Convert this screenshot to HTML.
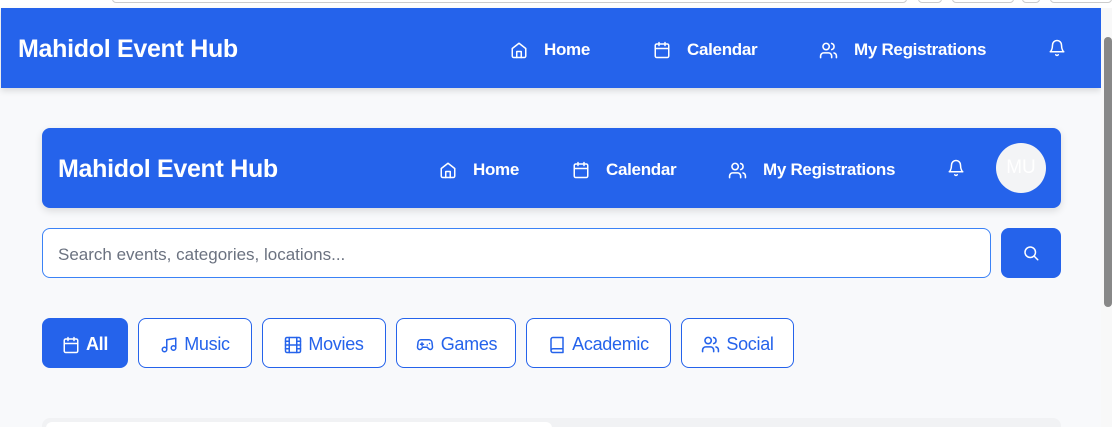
<!DOCTYPE html>
<html><head><style>
*{box-sizing:border-box;margin:0;padding:0}
html,body{width:1112px;height:427px;overflow:hidden}
body{background:#f8f9fb;font-family:"Liberation Sans",Arial,sans-serif;position:relative}
.top{position:absolute;left:0;top:0;width:1112px;height:8px;background:#fff}
.top i{position:absolute;top:-6px;height:9px;border:1px solid #ccc;border-radius:4px;background:#fff}
.hdr{position:absolute;background:#2563eb;color:#fff;display:flex;align-items:center}
.h1{left:1px;top:8px;width:1100px;height:80px;box-shadow:0 3px 6px rgba(0,0,0,.12)}
.h2{left:42px;top:128px;width:1019px;height:80px;border-radius:8px;box-shadow:0 3px 8px rgba(0,0,0,.12)}
.logo{position:absolute;font-weight:bold;font-size:25px;letter-spacing:-0.3px}
.nav{position:absolute;display:flex;align-items:center;font-weight:bold;font-size:17px;letter-spacing:-0.3px}
.nav svg{margin-right:16px}
svg{fill:none;stroke:currentColor;stroke-width:2;stroke-linecap:round;stroke-linejoin:round}
.sb{position:absolute;left:1101px;top:8px;width:11px;height:419px;background:#f8f8f8}
.thumb{position:absolute;left:1104px;top:37px;width:8px;height:270px;background:#888;border-radius:4px}
.search{position:absolute;left:42px;top:228px;width:949px;height:50px;border:1px solid #3b82f6;border-radius:8px;background:#fff;font-size:17px;color:#6b7280;padding:16px 0 0 15px}
.sbtn{position:absolute;left:1001px;top:228px;width:60px;height:50px;background:#2563eb;border-radius:8px;color:#fff;display:flex;align-items:center;justify-content:center}
.chip{position:absolute;top:318px;height:50px;border:1px solid #2563eb;border-radius:8px;background:#fff;color:#2563eb;font-size:18px;display:flex;align-items:center;justify-content:center;letter-spacing:-0.3px;padding-top:3px}
.chip svg{margin-right:6px}
.chip.on{background:#2563eb;color:#fff;font-weight:bold}
.card{position:absolute;left:42px;top:418px;width:1019px;height:20px;background:#f1f2f4;border-radius:8px}
.card i{position:absolute;left:4px;top:4px;width:506px;height:20px;background:#fff;border-radius:6px}
</style></head><body>
<div class="top"><i style="left:112px;width:795px"></i><i style="left:918px;width:24px"></i><i style="left:952px;width:62px"></i><i style="left:1022px;width:18px"></i><i style="left:1050px;width:62px"></i></div>
<div class="hdr h1">
<div class="logo" style="left:17px;top:27px">Mahidol Event Hub</div>
<div class="nav" style="left:509px;top:32px"><svg width="18" height="18" viewBox="0 0 24 24"><path d="M3 10l9-7 9 7v10a2 2 0 0 1-2 2H5a2 2 0 0 1-2-2z"/><path d="M9 22v-8h6v8"/></svg>Home</div>
<div class="nav" style="left:652px;top:32px"><svg width="18" height="18" viewBox="0 0 24 24"><rect x="3" y="4" width="18" height="18" rx="2"/><path d="M16 2v4M8 2v4M3 10h18"/></svg>Calendar</div>
<div class="nav" style="left:818px;top:32px"><svg width="19" height="19" viewBox="0 0 24 24"><path d="M16 21v-2a4 4 0 0 0-4-4H6a4 4 0 0 0-4 4v2"/><circle cx="9" cy="7" r="4"/><path d="M22 21v-2a4 4 0 0 0-3-3.87M16 3.13a4 4 0 0 1 0 7.75"/></svg>My Registrations</div>
<div class="nav" style="left:1047px;top:31px"><svg width="18" height="18" viewBox="0 0 24 24"><path d="M18 8A6 6 0 0 0 6 8c0 7-3 9-3 9h18s-3-2-3-9M13.7 21a2 2 0 0 1-3.4 0"/></svg></div>
</div>
<div class="sb"></div><div class="thumb"></div>
<div class="hdr h2">
<div class="logo" style="left:16px;top:27px">Mahidol Event Hub</div>
<div class="nav" style="left:397px;top:32px"><svg width="18" height="18" viewBox="0 0 24 24"><path d="M3 10l9-7 9 7v10a2 2 0 0 1-2 2H5a2 2 0 0 1-2-2z"/><path d="M9 22v-8h6v8"/></svg>Home</div>
<div class="nav" style="left:530px;top:32px"><svg width="18" height="18" viewBox="0 0 24 24"><rect x="3" y="4" width="18" height="18" rx="2"/><path d="M16 2v4M8 2v4M3 10h18"/></svg>Calendar</div>
<div class="nav" style="left:686px;top:32px"><svg width="19" height="19" viewBox="0 0 24 24"><path d="M16 21v-2a4 4 0 0 0-4-4H6a4 4 0 0 0-4 4v2"/><circle cx="9" cy="7" r="4"/><path d="M22 21v-2a4 4 0 0 0-3-3.87M16 3.13a4 4 0 0 1 0 7.75"/></svg>My Registrations</div>
<div class="nav" style="left:905px;top:31px"><svg width="18" height="18" viewBox="0 0 24 24"><path d="M18 8A6 6 0 0 0 6 8c0 7-3 9-3 9h18s-3-2-3-9M13.7 21a2 2 0 0 1-3.4 0"/></svg></div>
<div style="position:absolute;left:954px;top:15px;width:50px;height:50px;border-radius:50%;background:#f3f4f6;color:#fff;font-size:19px;display:flex;align-items:center;justify-content:center">MU</div>
</div>
<div class="search">Search events, categories, locations...</div>
<div class="sbtn"><svg width="18" height="18" viewBox="0 0 24 24"><circle cx="11" cy="11" r="7"/><path d="M21 21l-4.3-4.3"/></svg></div>
<div class="chip on" style="left:42px;width:86px"><svg width="18" height="18" viewBox="0 0 24 24"><rect x="3" y="4" width="18" height="18" rx="2"/><path d="M16 2v4M8 2v4M3 10h18"/></svg>All</div>
<div class="chip" style="left:138px;width:114px"><svg width="18" height="18" viewBox="0 0 24 24"><path d="M9 18V5l12-2v13"/><circle cx="6" cy="18" r="3"/><circle cx="18" cy="16" r="3"/></svg>Music</div>
<div class="chip" style="left:262px;width:124px"><svg width="18" height="18" viewBox="0 0 24 24"><rect x="2" y="2" width="20" height="20" rx="2"/><path d="M7 2v20M17 2v20M2 12h20M2 7h5M2 17h5M17 17h5M17 7h5"/></svg>Movies</div>
<div class="chip" style="left:396px;width:120px"><svg width="20" height="18" viewBox="0 0 24 24"><path d="M6 11h4M8 9v4M15 12h.01M18 10h.01"/><path d="M17.3 5H6.7a4 4 0 0 0-4 3.6L2 14.8A3 3 0 0 0 5 18c1 0 2-.5 2.6-1.3L9 15h6l1.4 1.7A3.4 3.4 0 0 0 19 18a3 3 0 0 0 3-3.2l-.7-6.2A4 4 0 0 0 17.3 5z"/></svg>Games</div>
<div class="chip" style="left:526px;width:145px"><svg width="18" height="18" viewBox="0 0 24 24"><path d="M4 19.5v-15A2.5 2.5 0 0 1 6.5 2H20v20H6.5a2.5 2.5 0 0 1 0-5H20"/></svg>Academic</div>
<div class="chip" style="left:681px;width:113px"><svg width="19" height="19" viewBox="0 0 24 24"><path d="M16 21v-2a4 4 0 0 0-4-4H6a4 4 0 0 0-4 4v2"/><circle cx="9" cy="7" r="4"/><path d="M22 21v-2a4 4 0 0 0-3-3.87M16 3.13a4 4 0 0 1 0 7.75"/></svg>Social</div>
<div class="card"><i></i></div>
</body></html>
